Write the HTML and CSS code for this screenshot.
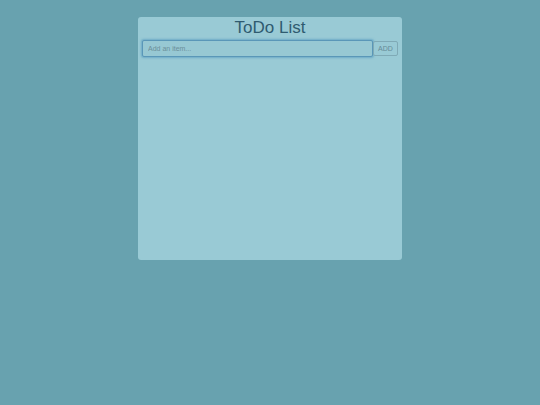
FILE: index.html
```html
<!DOCTYPE html>
<html>
<head>
<meta charset="utf-8">
<link rel="stylesheet" href="styles.css">
</head>
<body>
<div class="card">
  <h1 class="title">ToDo List</h1>
  <div class="add-row">
    <input class="add-input" type="text" placeholder="Add an item..." autofocus>
    <button class="add-btn">ADD</button>
  </div>
  <ul class="items"></ul>
</div>
</body>
</html>
```
FILE: styles.css
```css
html, body {
  margin: 0;
  padding: 0;
  background: #68a2af;
  font-family: "Liberation Sans", Arial, sans-serif;
}
.card {
  width: 264px;
  height: 243px;
  margin: 17px auto 0;
  background: #99cad5;
  border-radius: 3px;
  box-sizing: border-box;
  padding: 0 4px;
}
.title {
  margin: 0;
  font-size: 17px;
  font-weight: normal;
  line-height: 21px;
  height: 23px;
  text-align: center;
  color: #2f5b70;
}
.add-row {
  display: flex;
  align-items: center;
  height: 17px;
}
.add-input {
  width: 231px;
  height: 17px;
  box-sizing: border-box;
  margin: 0;
  padding: 0 5px;
  border: 1px solid #5a97b8;
  border-radius: 2px;
  background: #97c8d3;
  font-family: "Liberation Sans", Arial, sans-serif;
  font-size: 7px;
  color: #37596a;
  outline: none;
  box-shadow: 0 0 2px 1px rgba(80, 150, 190, 0.6);
}
.add-input::placeholder {
  color: #6b8f9a;
}
.add-btn {
  width: 25px;
  height: 15px;
  margin: 0;
  padding: 0;
  box-sizing: border-box;
  border: 1px solid #7faab6;
  border-radius: 2px;
  background: #99cad5;
  color: #668c98;
  font-family: "Liberation Sans", Arial, sans-serif;
  font-size: 7px;
}
.items {
  margin: 0;
  padding: 0;
  list-style: none;
}
```
